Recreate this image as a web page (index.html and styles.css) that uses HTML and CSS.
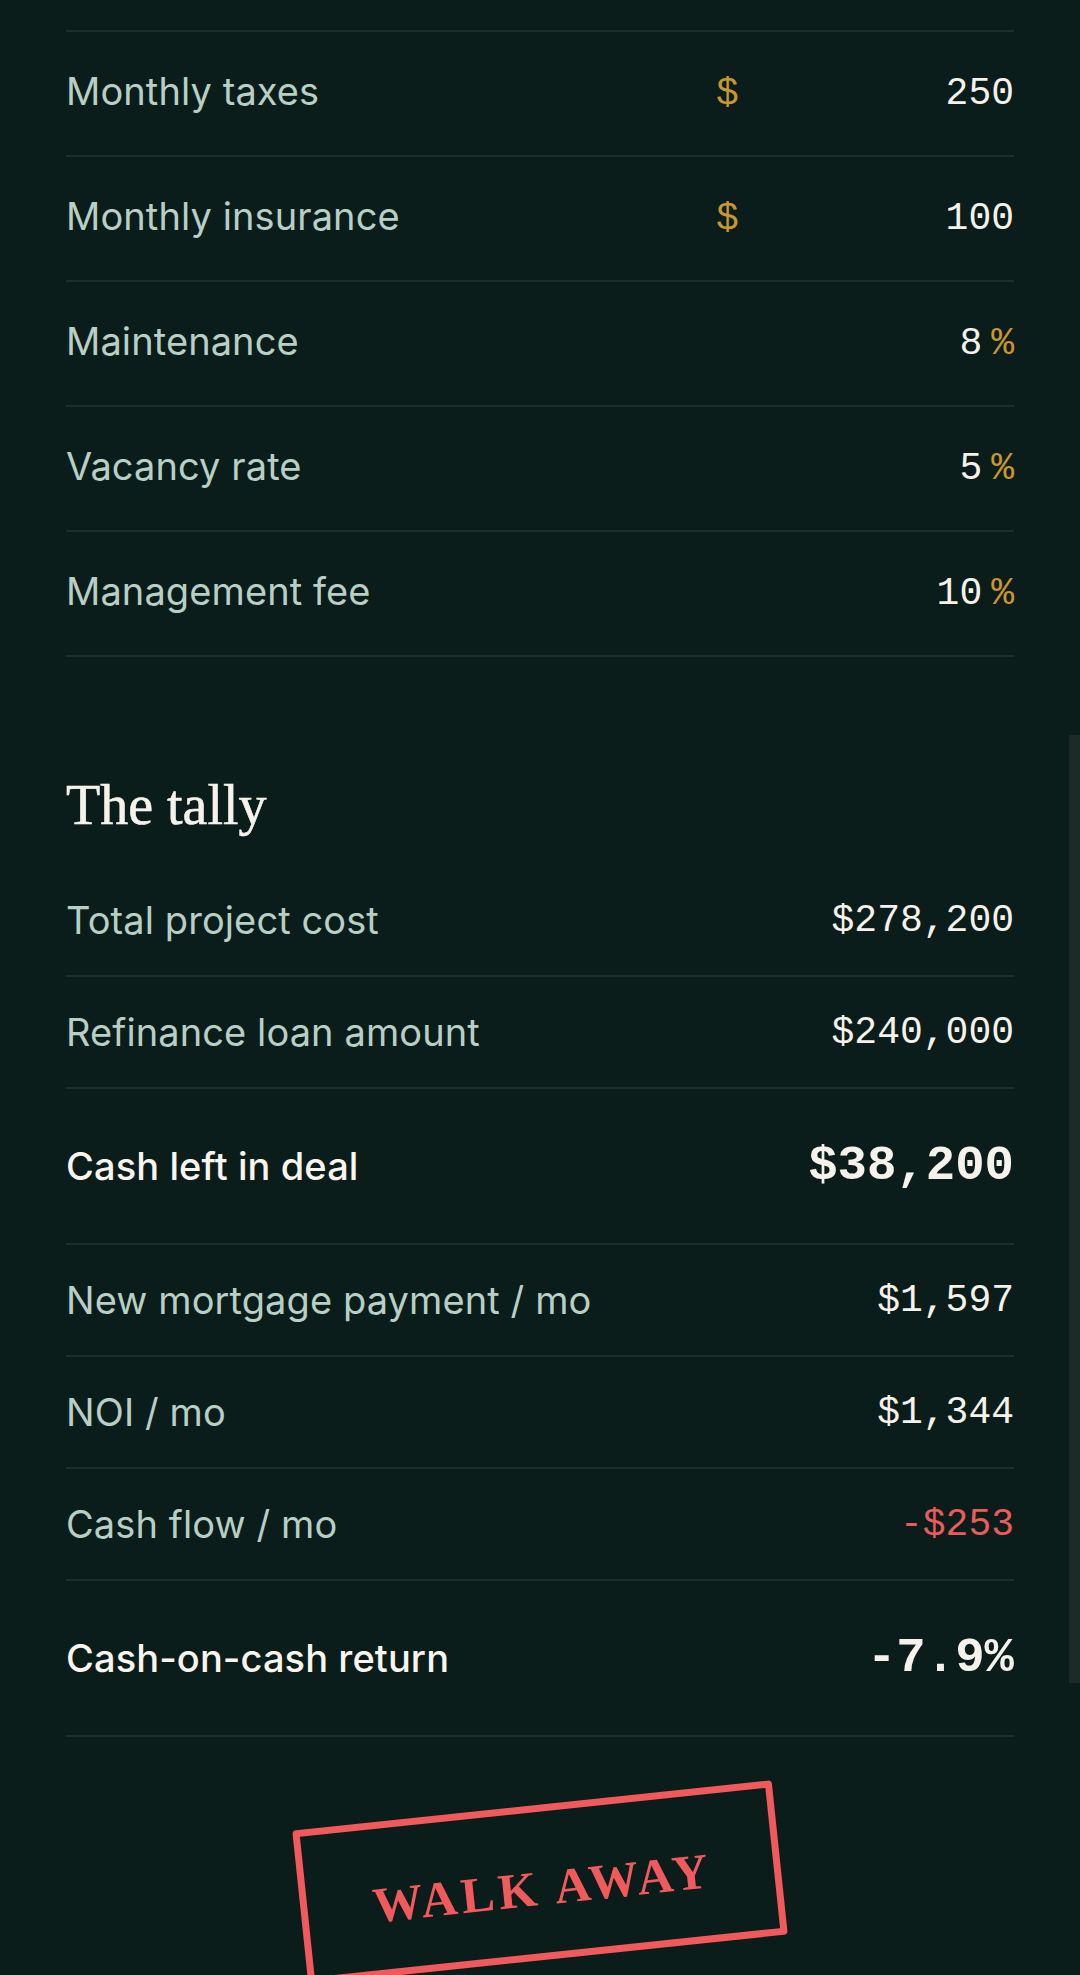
FILE: index.html
```html
<!DOCTYPE html>
<html lang="en">
<head>
<meta charset="utf-8">
<title>The tally</title>
<link rel="stylesheet" href="styles.css">
</head>
<body>
<div class="page">
  <div class="inputs">
    <div class="row">
      <span class="label">Monthly taxes</span>
      <div class="field"><span class="pre">$</span><span class="val">250</span></div>
    </div>
    <div class="row">
      <span class="label">Monthly insurance</span>
      <div class="field"><span class="pre">$</span><span class="val">100</span></div>
    </div>
    <div class="row">
      <span class="label">Maintenance</span>
      <div class="field"><span class="val">8</span><span class="suf">%</span></div>
    </div>
    <div class="row">
      <span class="label">Vacancy rate</span>
      <div class="field"><span class="val">5</span><span class="suf">%</span></div>
    </div>
    <div class="row">
      <span class="label">Management fee</span>
      <div class="field"><span class="val">10</span><span class="suf">%</span></div>
    </div>
  </div>

  <section class="tally">
    <h2 class="tally-title">The tally</h2>
    <div class="results">
      <div class="res"><span class="label">Total project cost</span><span class="num">$278,200</span></div>
      <div class="res"><span class="label">Refinance loan amount</span><span class="num">$240,000</span></div>
      <div class="res big"><span class="label">Cash left in deal</span><span class="num">$38,200</span></div>
      <div class="res"><span class="label">New mortgage payment / mo</span><span class="num">$1,597</span></div>
      <div class="res"><span class="label">NOI / mo</span><span class="num">$1,344</span></div>
      <div class="res"><span class="label">Cash flow / mo</span><span class="num neg">-$253</span></div>
      <div class="res big"><span class="label">Cash-on-cash return</span><span class="num">-7.9%</span></div>
    </div>
  </section>

  <div class="verdict">
    <div class="stamp">WALK AWAY</div>
  </div>
</div>
<div class="scroll-thumb"></div>
</body>
</html>
```

FILE: styles.css
```css
html, body {
  margin: 0;
  padding: 0;
}

body {
  background: #0b1d1a;
  height: 1975px;
  overflow: hidden;
  position: relative;
  font-family: Inter, "Noto Sans", sans-serif;
}

.page {
  padding: 30px 66px 0;
}

.inputs {
  border-top: 2px solid #1d2f2b;
}

.row {
  height: 125px;
  box-sizing: border-box;
  border-bottom: 2px solid #1d2f2b;
  display: flex;
  align-items: center;
  justify-content: space-between;
}

.label {
  font-size: 38px;
  color: #b8cfc5;
  letter-spacing: 0.1px;
}

.row .label {
  padding-bottom: 5px;
}

.field {
  width: 298px;
  display: flex;
  align-items: center;
  font-family: "Liberation Mono", monospace;
  font-size: 38px;
}

.pre {
  color: #c9962f;
}

.val {
  margin-left: auto;
  color: #f4f2ea;
}

.suf {
  color: #c9962f;
  margin-left: 9px;
}

.tally-title {
  margin: 115px 0 26px;
  font-family: "Liberation Serif", serif;
  font-weight: 400;
  font-size: 56px;
  line-height: 1.2;
  color: #f4f2ea;
  -webkit-text-stroke: 0.6px #f4f2ea;
}

.res {
  height: 112px;
  box-sizing: border-box;
  border-bottom: 2px solid #1d2f2b;
  display: flex;
  align-items: center;
  justify-content: space-between;
}

.res.big {
  height: 156px;
}

.res.big .label {
  color: #f7f5ee;
  font-weight: 500;
}

.num {
  font-family: "Liberation Mono", monospace;
  font-size: 38px;
  color: #f4f2ea;
}

.res.big .num {
  font-size: 49px;
  font-weight: 700;
}

.num.neg {
  color: #ec5b5b;
}

.verdict {
  padding-top: 68px;
  display: flex;
  justify-content: center;
}

.stamp {
  width: 482px;
  height: 155px;
  box-sizing: border-box;
  padding-top: 10px;
  padding-left: 4px;
  border: 7px solid #f05a5c;
  border-radius: 4px;
  transform: rotate(-6deg);
  display: flex;
  align-items: center;
  justify-content: center;
  font-family: "Liberation Serif", serif;
  font-weight: 700;
  font-size: 50px;
  letter-spacing: 4px;
  color: #f05a5c;
}

.scroll-thumb {
  position: absolute;
  top: 735px;
  right: 0;
  width: 11px;
  height: 948px;
  background: #1c2b27;
}
```
